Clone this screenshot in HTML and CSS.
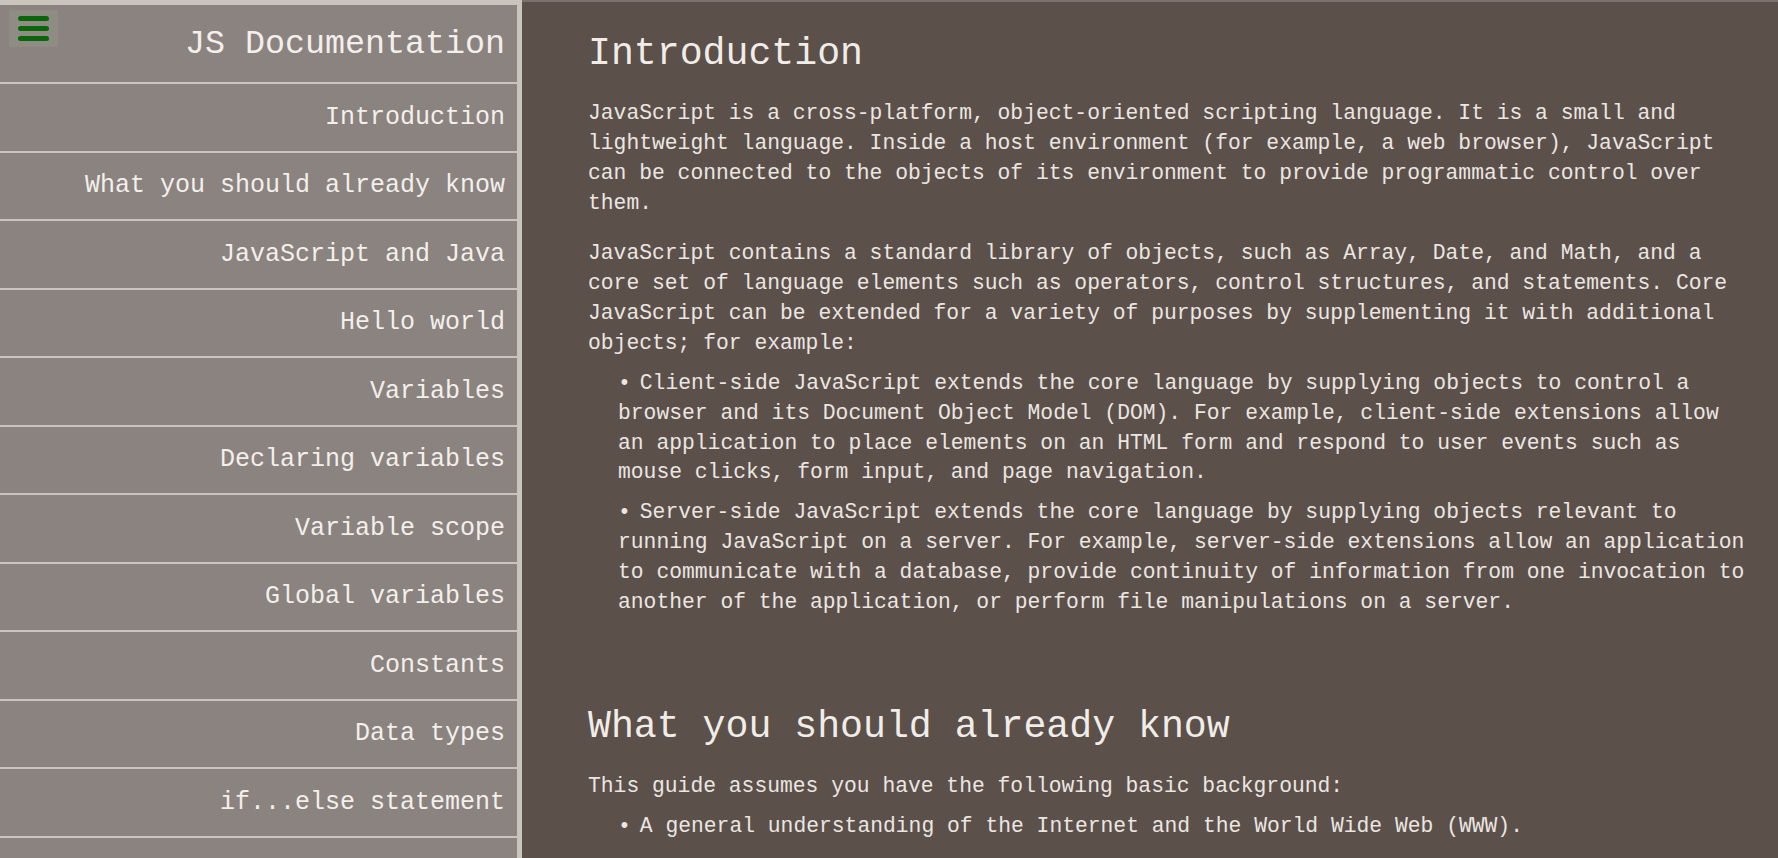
FILE: index.html
```html
<!DOCTYPE html>
<html lang="en">
<head>
<meta charset="utf-8">
<title>JS Documentation</title>
<link rel="stylesheet" href="styles.css">
</head>
<body>
<div class="page">
  <nav class="sidebar" id="navbar">
    <button class="menu-btn" aria-label="Menu">
      <span class="menu-bar"></span>
      <span class="menu-bar"></span>
      <span class="menu-bar"></span>
    </button>
    <header class="sidebar-header">
      <h1 class="sidebar-title">JS Documentation</h1>
    </header>
    <ul class="nav-list">
      <li><a class="nav-link" href="#Introduction">Introduction</a></li>
      <li><a class="nav-link" href="#What_you_should_already_know">What you should already know</a></li>
      <li><a class="nav-link" href="#JavaScript_and_Java">JavaScript and Java</a></li>
      <li><a class="nav-link" href="#Hello_world">Hello world</a></li>
      <li><a class="nav-link" href="#Variables">Variables</a></li>
      <li><a class="nav-link" href="#Declaring_variables">Declaring variables</a></li>
      <li><a class="nav-link" href="#Variable_scope">Variable scope</a></li>
      <li><a class="nav-link" href="#Global_variables">Global variables</a></li>
      <li><a class="nav-link" href="#Constants">Constants</a></li>
      <li><a class="nav-link" href="#Data_types">Data types</a></li>
      <li><a class="nav-link" href="#if...else_statement">if...else statement</a></li>
    </ul>
  </nav>
  <main class="content" id="main-doc">
    <section class="doc-section" id="Introduction">
      <h2 class="section-title">Introduction</h2>
      <p class="text">JavaScript is a cross-platform, object-oriented scripting language. It is a small and lightweight language. Inside a host environment (for example, a web browser), JavaScript can be connected to the objects of its environment to provide programmatic control over them.</p>
      <p class="text lead">JavaScript contains a standard library of objects, such as Array, Date, and Math, and a core set of language elements such as operators, control structures, and statements. Core JavaScript can be extended for a variety of purposes by supplementing it with additional objects; for example:</p>
      <ul class="bullets">
        <li class="bullet">Client-side JavaScript extends the core language by supplying objects to control a browser and its Document Object Model (DOM). For example, client-side extensions allow an application to place elements on an HTML form and respond to user events such as mouse clicks, form input, and page navigation.</li>
        <li class="bullet">Server-side JavaScript extends the core language by supplying objects relevant to running JavaScript on a server. For example, server-side extensions allow an application to communicate with a database, provide continuity of information from one invocation to another of the application, or perform file manipulations on a server.</li>
      </ul>
    </section>
    <section class="doc-section" id="What_you_should_already_know">
      <h2 class="section-title">What you should already know</h2>
      <p class="text lead">This guide assumes you have the following basic background:</p>
      <ul class="bullets">
        <li class="bullet">A general understanding of the Internet and the World Wide Web (WWW).</li>
      </ul>
    </section>
  </main>
</div>
</body>
</html>
```

FILE: styles.css
```css
html, body {
  margin: 0;
  height: 100%;
}

body {
  font-family: "Courier New", "Nimbus Mono PS", "FreeMono", "Liberation Mono", monospace;
  background: #5b504a;
  overflow: hidden;
}

.page {
  display: grid;
  grid-template-columns: 522px 1fr;
  height: 100vh;
}

/* ---------- Sidebar ---------- */
.sidebar {
  position: relative;
  background: #8b8380;
  border-top: 5px solid #cac4bf;
  border-right: 5px solid #cac4bf;
  overflow: hidden;
}

.menu-btn {
  position: absolute;
  top: 5px;
  left: 9px;
  width: 49px;
  height: 37px;
  padding: 0;
  border: none;
  background: #8f8c83;
  display: flex;
  flex-direction: column;
  align-items: center;
  justify-content: center;
  gap: 5px;
}

.menu-bar {
  display: block;
  width: 31px;
  height: 5px;
  border-radius: 3px;
  background: #0b660b;
}

.sidebar-header {
  height: 77px;
  display: flex;
  align-items: center;
  justify-content: flex-end;
  padding-right: 12px;
  border-bottom: 2px solid #cac4bf;
}

.sidebar-title {
  margin: 0;
  font-size: 33.33px;
  font-weight: normal;
  color: #f3efeb;
}

.nav-list {
  list-style: none;
  margin: 0;
  padding: 0;
}

.nav-link {
  display: flex;
  align-items: center;
  justify-content: flex-end;
  height: 66.5px;
  padding-right: 12px;
  border-bottom: 2px solid #cac4bf;
  font-size: 25px;
  color: #f3efeb;
  text-decoration: none;
}

/* ---------- Main content ---------- */
.content {
  border-top: 2px solid #7a716c;
  padding: 0 28px 0 66px;
  overflow: hidden;
  color: #ebe6e2;
  font-size: 21.33px;
  line-height: 1.4;
}

.doc-section {
  padding-top: 30px;
  padding-bottom: 47px;
}

.section-title {
  margin: 0 0 24px;
  font-size: 38.2px;
  font-weight: normal;
  line-height: normal;
  color: #f0ece8;
}

.text {
  margin: 0 0 21px;
}

.text.lead {
  margin-bottom: 10px;
}

.bullets {
  list-style: none;
  margin: 0;
  padding-left: 30px;
}

.bullet {
  margin-bottom: 10px;
}

.bullet::before {
  content: "\2022";
  margin-right: 9px;
}
```
